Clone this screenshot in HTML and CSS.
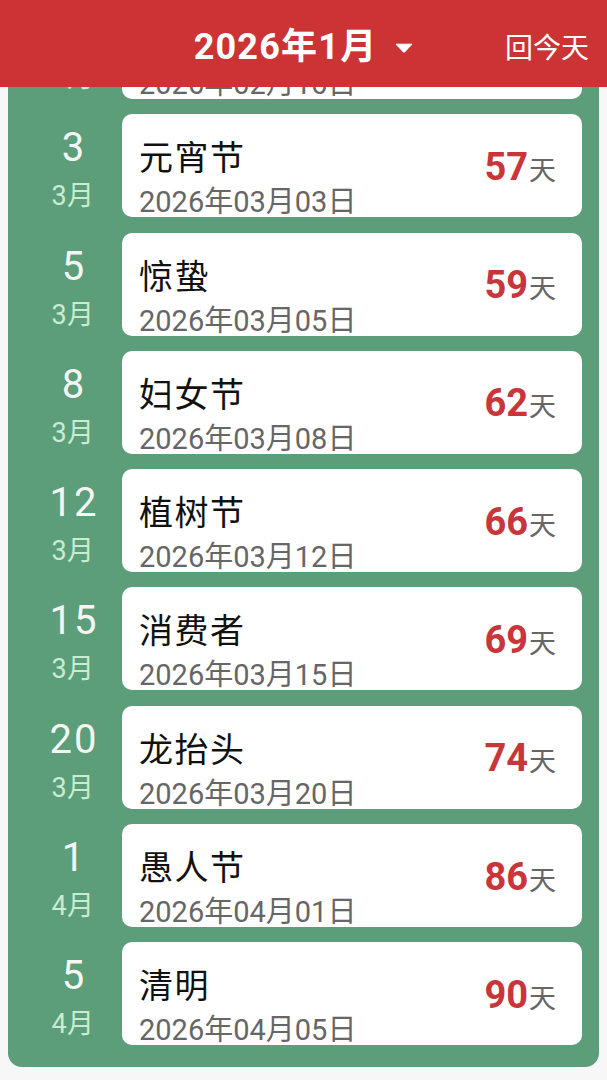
FILE: index.html
```html
<!DOCTYPE html>
<html lang="zh-CN">
<head>
<meta charset="utf-8">
<title>节日倒数</title>
<link rel="stylesheet" href="styles.css">
</head>
<body>
<header class="topbar">
  <div class="topbar-spacer"></div>
  <div class="month-picker">
    <span class="month-label">2026年1月</span>
    <svg class="caret" width="18" height="10" viewBox="0 0 18 10"><path d="M1 1.2 L17 1.2 L9.6 9 Q9 9.6 8.4 9 Z" fill="#fff" stroke="#fff" stroke-width="1" stroke-linejoin="round"/></svg>
  </div>
  <div class="today-btn">回今天</div>
</header>

<main class="panel">
  <div class="row">
    <div class="datecol"><div class="day">16</div><div class="mon">2月</div></div>
    <div class="card"><div class="info"><div class="name">除夕</div><div class="full">2026年02月16日</div></div><div class="left"><span class="num">42</span><span class="unit">天</span></div></div>
  </div>
  <div class="row">
    <div class="datecol"><div class="day">3</div><div class="mon">3月</div></div>
    <div class="card"><div class="info"><div class="name">元宵节</div><div class="full">2026年03月03日</div></div><div class="left"><span class="num">57</span><span class="unit">天</span></div></div>
  </div>
  <div class="row">
    <div class="datecol"><div class="day">5</div><div class="mon">3月</div></div>
    <div class="card"><div class="info"><div class="name">惊蛰</div><div class="full">2026年03月05日</div></div><div class="left"><span class="num">59</span><span class="unit">天</span></div></div>
  </div>
  <div class="row">
    <div class="datecol"><div class="day">8</div><div class="mon">3月</div></div>
    <div class="card"><div class="info"><div class="name">妇女节</div><div class="full">2026年03月08日</div></div><div class="left"><span class="num">62</span><span class="unit">天</span></div></div>
  </div>
  <div class="row">
    <div class="datecol"><div class="day">12</div><div class="mon">3月</div></div>
    <div class="card"><div class="info"><div class="name">植树节</div><div class="full">2026年03月12日</div></div><div class="left"><span class="num">66</span><span class="unit">天</span></div></div>
  </div>
  <div class="row">
    <div class="datecol"><div class="day">15</div><div class="mon">3月</div></div>
    <div class="card"><div class="info"><div class="name">消费者</div><div class="full">2026年03月15日</div></div><div class="left"><span class="num">69</span><span class="unit">天</span></div></div>
  </div>
  <div class="row">
    <div class="datecol"><div class="day">20</div><div class="mon">3月</div></div>
    <div class="card"><div class="info"><div class="name">龙抬头</div><div class="full">2026年03月20日</div></div><div class="left"><span class="num">74</span><span class="unit">天</span></div></div>
  </div>
  <div class="row">
    <div class="datecol"><div class="day">1</div><div class="mon">4月</div></div>
    <div class="card"><div class="info"><div class="name">愚人节</div><div class="full">2026年04月01日</div></div><div class="left"><span class="num">86</span><span class="unit">天</span></div></div>
  </div>
  <div class="row">
    <div class="datecol"><div class="day">5</div><div class="mon">4月</div></div>
    <div class="card"><div class="info"><div class="name">清明</div><div class="full">2026年04月05日</div></div><div class="left"><span class="num">90</span><span class="unit">天</span></div></div>
  </div>
</main>
</body>
</html>
```

FILE: styles.css
```css
* { box-sizing: border-box; }

html, body {
  margin: 0;
  padding: 0;
  background: #f7f7f7;
  font-family: Roboto, "Noto Sans CJK SC", sans-serif;
  width: 607px;
  height: 1080px;
  overflow: hidden;
}

.topbar {
  position: fixed;
  top: 0;
  left: 0;
  right: 0;
  height: 87px;
  background: #cc3334;
  z-index: 10;
  display: grid;
  grid-template-columns: 1fr auto 1fr;
  align-items: center;
  padding: 7px 18px 0 18px;
}

.month-picker {
  display: flex;
  align-items: center;
  gap: 18px;
  color: #fff;
}

.month-label {
  font-size: 36px;
  font-weight: 700;
  line-height: 40px;
  letter-spacing: 1.2px;
}

.caret { display: block; margin-top: 2px; }

.today-btn {
  justify-self: end;
  color: #fff;
  font-size: 28px;
  line-height: 36px;
  margin-top: 4px;
}

.panel {
  margin: -4px 8px 0 8px;
  background: #5b9e79;
  border-radius: 0 0 14px 14px;
  padding: 0 17px 22px 0;
  display: flex;
  flex-direction: column;
  gap: 15.3px;
}

.row {
  display: flex;
  height: 103px;
}

.datecol {
  width: 114px;
  flex: none;
  padding: 10px 0 0 16px;
  display: flex;
  flex-direction: column;
  align-items: center;
}

.day {
  color: #f4f6f4;
  font-size: 40px;
  line-height: 48px;
  height: 48px;
  letter-spacing: 2px;
  margin-right: -2px;
}

.mon {
  color: #c9ecd3;
  font-size: 27px;
  line-height: 48px;
  letter-spacing: 0.5px;
}

.card {
  flex: 1;
  background: #fff;
  border-radius: 10px;
  display: flex;
  align-items: center;
  padding: 0 26px 0 17px;
}

.info {
  flex: 1;
  align-self: stretch;
  padding-top: 24px;
}

.name {
  color: #111;
  font-size: 34px;
  line-height: 40px;
  letter-spacing: 1.5px;
}

.full {
  color: #666;
  font-size: 29px;
  line-height: 32px;
  margin-top: 8px;
  white-space: nowrap;
}

.left {
  display: flex;
  align-items: baseline;
  margin-top: 2px;
}

.num {
  color: #c8353a;
  font-size: 38px;
  font-weight: 700;
}

.unit {
  color: #666;
  font-size: 27px;
  margin-left: 1px;
}
```
